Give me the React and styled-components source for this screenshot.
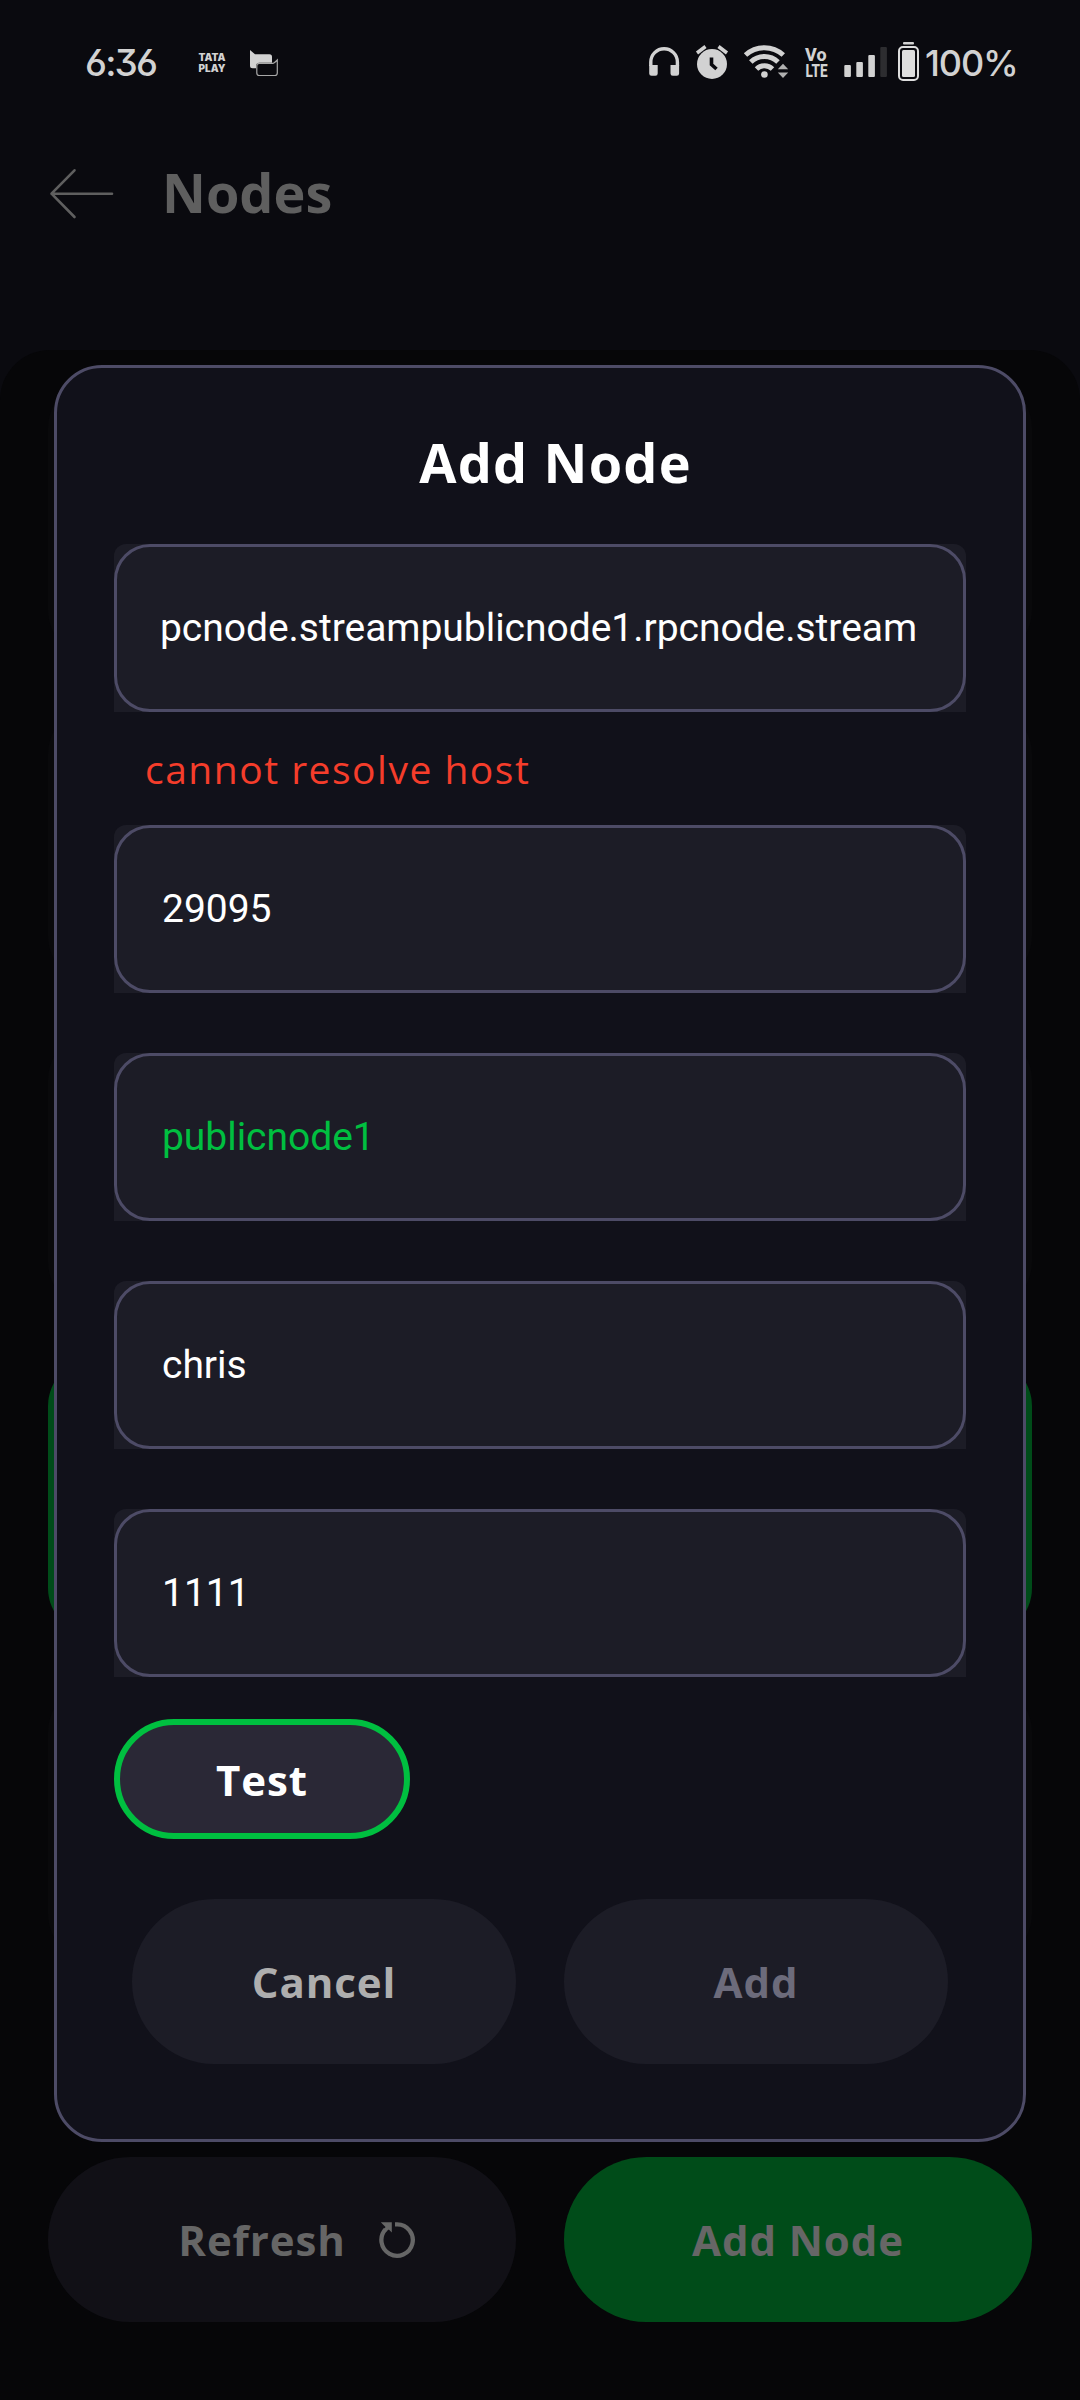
import React from "react";
import styled, { createGlobalStyle } from "styled-components";

const GlobalStyle = createGlobalStyle`
  * { box-sizing: border-box; }
  body { margin: 0; background: #060608; }
  button, input { font: inherit; margin: 0; }
`;

const Screen = styled.div`
  position: relative;
  width: 1080px;
  height: 2400px;
  display: flex;
  flex-direction: column;
  background: #0a0a0f;
  font-family: "Open Sans", "Noto Sans", sans-serif;
  overflow: hidden;
`;

const StatusBar = styled.header`
  height: 126px;
  padding: 0 60px 0 85px;
  display: flex;
  justify-content: space-between;
  align-items: center;
  color: #d2d2d2;
  font-family: Inter, Roboto, sans-serif;
`;

const StatusGroup = styled.div`
  display: flex;
  align-items: center;
  height: 100%;
`;

const Clock = styled.span`
  width: 110px;
  font-size: 37px;
  font-weight: 450;
  line-height: 44px;
  letter-spacing: -1.8px;
  font-feature-settings: "cv03", "cv09";
`;

const BatteryLevel = styled.span`
  width: 95px;
  font-size: 36px;
  font-weight: 450;
  line-height: 44px;
  letter-spacing: -1.1px;
  white-space: nowrap;
`;

const TopBar = styled.div`
  height: 224px;
  padding: 37px 48px 0;
  display: flex;
  align-items: flex-start;
  gap: 46px;
`;

const BackButton = styled.button`
  width: 68px;
  height: 60px;
  padding: 0;
  border: 0;
  background: none;
  display: flex;
`;

const PageTitle = styled.h1`
  margin: 0;
  color: #5f5f5f;
  font-size: 54px;
  line-height: 58px;
  font-weight: 700;
`;

const Sheet = styled.main`
  flex: 1;
  padding: 30px 48px 78px;
  display: flex;
  flex-direction: column;
  justify-content: space-between;
  background: #060608;
  border-radius: 50px 50px 0 0;
`;

const NodeList = styled.div`
  display: flex;
  flex-direction: column;
  gap: 48px;
`;

const NodeCard = styled.div`
  height: 278px;
  border-radius: 48px;
  background: ${(p) => (p.$selected ? "#004c19" : "#09090b")};
`;

const ButtonRow = styled.div`
  display: grid;
  grid-template-columns: 1fr 1fr;
  gap: 48px;
  padding: 0 ${(p) => p.$inset || 0}px;
`;

const PillButton = styled.button`
  height: 165px;
  padding: 0 0 0 ${(p) => p.$indent || 0}px;
  border: 0;
  border-radius: 83px;
  display: flex;
  align-items: center;
  justify-content: center;
  gap: 32px;
  background: ${(p) => p.$fill};
  color: ${(p) => p.$ink};
  font-size: 42px;
  font-weight: 700;
  line-height: 57px;
  letter-spacing: 0.9px;
`;

const ModalLayer = styled.div`
  position: absolute;
  inset: 0;
  padding: 365px 54px 258px;
  display: flex;
`;

const Dialog = styled.section`
  flex: 1;
  padding: 57px 57px 75px;
  display: flex;
  flex-direction: column;
  border: 3px solid #4d4b66;
  border-radius: 48px;
  background: #11111a;
`;

const DialogTitle = styled.h2`
  margin: 0 0 49px;
  padding-left: 31px;
  height: 70px;
  color: #fff;
  text-align: center;
  font-size: 54px;
  font-weight: 700;
  line-height: 75px;
  letter-spacing: 1.2px;
`;

const Field = styled.div`
  height: 168px;
  margin-bottom: ${(p) => p.$gap}px;
  background: #1c1c26;
  border-radius: 12px 12px 0 0;
`;

const FieldInput = styled.input`
  display: block;
  width: 100%;
  height: 100%;
  padding: 0 40px 0 ${(p) => p.$indent || 45}px;
  border: 3px solid #4d4b66;
  border-radius: 36px;
  outline: none;
  background: transparent;
  color: ${(p) => p.$ink || "#fff"};
  font-family: Roboto, sans-serif;
  font-size: 39px;
  letter-spacing: -0.03px;
`;

const ErrorText = styled.p`
  margin: 0;
  height: 113px;
  padding: 28px 0 0 31px;
  color: #f53d2b;
  font-size: 39px;
  line-height: 58px;
  letter-spacing: 1.5px;
`;

const TestButton = styled.button`
  width: 296px;
  height: 120px;
  margin-bottom: 60px;
  padding: 0;
  border: 6px solid #00bf40;
  border-radius: 60px;
  background: #2a2836;
  color: #fff;
  font-size: 42px;
  font-weight: 700;
  letter-spacing: 0.9px;
`;

const NotificationIcons = () => (
  <svg width="90" height="50" viewBox="195 38 90 50" fill="#d2d2d2">
    <text fontFamily="Inter, sans-serif" fontWeight="900" fontSize="10">
      <tspan x="198.5" y="61.3" textLength="27" lengthAdjust="spacingAndGlyphs">TATA</tspan>
      <tspan x="198.5" y="71.5" textLength="27" lengthAdjust="spacingAndGlyphs">PLAY</tspan>
    </text>
    <path d="M250 50l5 4.200h14.500q2.500 0 2.500 2.500v6h-12.500q-3.500 0-3.500 3.500v2h-3.500q-2.500 0-2.500-2.500z" />
    <path
      d="M277.300 60v13q0 2.500-2.500 2.500h-15.500q-2.500 0-2.500-2.500v-7.200q0-2.500 2.500-2.500h13.500q1.500 0 4.500-3.300z"
      fill="#0a0a0f"
      stroke="#a8a8a8"
      strokeWidth="1.200"
    />
  </svg>
);

const SystemIcons = () => (
  <svg width="280" height="50" viewBox="645 38 280 50" fill="#d2d2d2">
    <path d="M650.800 66v-4a13.300 13.300 0 0 1 26.600 0v4" fill="none" stroke="#d2d2d2" strokeWidth="3.400" />
    <path d="M649.200 65h8.500v8.500q0 2.300-2.300 2.300h-3.900q-2.300 0-2.300-2.300zM670.500 65h8.600v8.500q0 2.300-2.300 2.300h-4q-2.300 0-2.300-2.300z" />
    <circle cx="712" cy="64" r="15" />
    <path d="M697 53l8.500-6.500M727 53l-8.500-6.500" stroke="#d2d2d2" strokeWidth="3.500" />
    <path d="M711.500 57.500v7l5 4.500" fill="none" stroke="#0a0a0f" strokeWidth="3.600" />
    <g fill="none" stroke="#d2d2d2" strokeWidth="5">
      <path d="M745.500 55a28 28 0 0 1 37.800 0" />
      <path d="M750.800 62a19.500 19.500 0 0 1 27.200 0" />
      <path d="M756.500 69a11.500 11.500 0 0 1 16 0" />
    </g>
    <circle cx="764.400" cy="74.500" r="3.300" />
    <path d="M777.800 69.200l5.200-5.400 5.200 5.400zM777.800 72.600h10.400l-5.200 5.400z" fill="#b0b0b0" />
    <g fontFamily="Roboto, sans-serif" fontWeight="800">
      <text x="805" y="60.500" fontSize="19" textLength="21.500" lengthAdjust="spacingAndGlyphs">Vo</text>
      <text x="805.500" y="77" fontSize="19" textLength="22" lengthAdjust="spacingAndGlyphs">LTE</text>
    </g>
    <rect x="844.300" y="65" width="6.600" height="12" rx="1" />
    <rect x="856.300" y="62" width="6.600" height="15" rx="1" />
    <rect x="868.300" y="55" width="6.600" height="22" rx="1" />
    <rect x="880.300" y="47" width="6.600" height="30" rx="1" fill="#2d2d30" />
    <rect x="903" y="42" width="11" height="2.600" rx="1" />
    <rect x="899" y="47" width="19" height="33" rx="4" fill="none" stroke="#dedede" strokeWidth="2" />
    <rect x="902" y="50" width="13" height="27" rx="1.500" fill="#dedede" />
  </svg>
);

const BackIcon = () => (
  <svg width="68" height="60" viewBox="48 163 68 60" fill="none" stroke="#5f5f5f" strokeWidth="2.600" strokeLinecap="round" strokeLinejoin="round">
    <path d="M112 193.700H51.500M74.500 170.300L51.500 193.700L74.500 217" />
  </svg>
);

const RefreshIcon = () => (
  <svg width="38" height="38" viewBox="0 0 38 38">
    <path d="M17 3.300h2.200a15.700 15.700 0 1 1-11.600 5" fill="none" stroke="#666" strokeWidth="4.300" />
    <path d="M2.800 1.300h11v10.300l-3-3-3.500 2.600-1.800-2.200 2-3z" fill="#666" />
  </svg>
);

const fields = [
  { value: "29095" },
  { value: "publicnode1", ink: "#00bf40" },
  { value: "chris" },
  { value: "1111", gap: 42 },
];

export default function App() {
  return (
    <Screen>
      <GlobalStyle />
      <StatusBar>
        <StatusGroup>
          <Clock>6:36</Clock>
          <NotificationIcons />
        </StatusGroup>
        <StatusGroup>
          <SystemIcons />
          <BatteryLevel>100%</BatteryLevel>
        </StatusGroup>
      </StatusBar>
      <TopBar>
        <BackButton aria-label="Back">
          <BackIcon />
        </BackButton>
        <PageTitle>Nodes</PageTitle>
      </TopBar>
      <Sheet>
        <NodeList>
          <NodeCard />
          <NodeCard />
          <NodeCard />
          <NodeCard $selected />
          <NodeCard />
        </NodeList>
        <ButtonRow>
          <PillButton $fill="#111016" $ink="#666" $indent={30}>
            Refresh
            <RefreshIcon />
          </PillButton>
          <PillButton $fill="#004c19" $ink="#666">Add Node</PillButton>
        </ButtonRow>
      </Sheet>
      <ModalLayer>
        <Dialog>
          <DialogTitle>Add Node</DialogTitle>
          <Field $gap={0}>
            <FieldInput readOnly value="pcnode.streampublicnode1.rpcnode.stream" $indent={43} />
          </Field>
          <ErrorText>cannot resolve host</ErrorText>
          {fields.map((f) => (
            <Field key={f.value} $gap={f.gap || 60}>
              <FieldInput readOnly value={f.value} $ink={f.ink} />
            </Field>
          ))}
          <TestButton>Test</TestButton>
          <ButtonRow $inset={18}>
            <PillButton $fill="#1c1c26" $ink="#aeaeae">Cancel</PillButton>
            <PillButton $fill="#1c1c26" $ink="#6c6b7b">Add</PillButton>
          </ButtonRow>
        </Dialog>
      </ModalLayer>
    </Screen>
  );
}
